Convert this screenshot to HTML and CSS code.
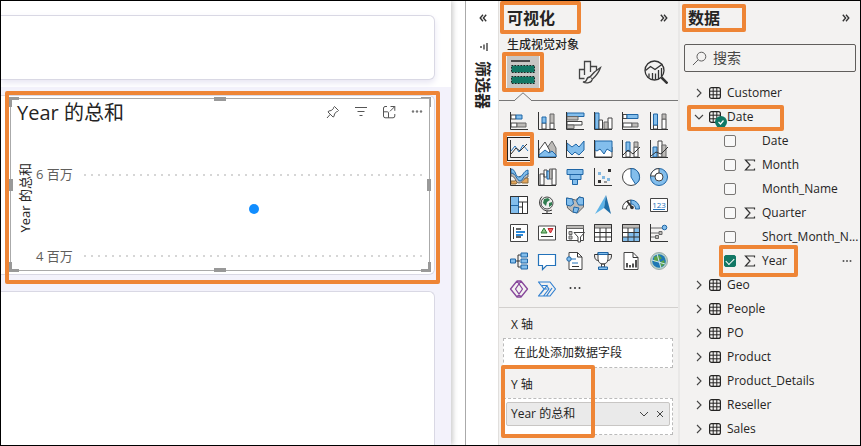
FILE: index.html
```html
<!DOCTYPE html>
<html lang="zh-CN">
<head>
<meta charset="utf-8">
<title>Year 的总和</title>
<link rel="stylesheet" href="styles.css">
</head>
<body>
<svg class="defs" aria-hidden="true">
  <symbol id="dbl" viewBox="0 0 10 10"><path d="M1 1l3.500 4-3.500 4M5 1l3.500 4-3.500 4" fill="none" stroke="#333" stroke-width="1.700"/></symbol>
  <symbol id="chev" viewBox="0 0 10 10"><path d="M3 1l4 4-4 4" fill="none" stroke="#444" stroke-width="1.100"/></symbol>
  <symbol id="table" viewBox="0 0 12 12"><rect x=".6" y=".6" width="10.800" height="10.800" rx="2" fill="none" stroke="#252423" stroke-width="1.200"/><path d="M4.200 .6v10.800M7.800 .6v10.800M.6 4.200h10.800M.6 7.800h10.800" stroke="#252423" stroke-width="1"/></symbol>
  <symbol id="sigma" viewBox="0 0 12 12"><path d="M10.500 2.500V1H1.500l4.500 5-4.500 5h9V9.500" fill="none" stroke="#333" stroke-width="1.200"/></symbol>
</svg>
<div class="app">
  <main class="canvas">
    <div class="sheet">
      <section class="card card-top"></section>
      <section class="card chart mark-host">
        <span class="mark mark-chart"></span>
        <div class="selection">
          <i class="h tl"></i><i class="h tr"></i><i class="h bl"></i><i class="h br"></i>
          <i class="h tm"></i><i class="h bm"></i><i class="h lm"></i><i class="h rm"></i>
          <header class="chart-head">
            <h1>Year 的总和</h1>
            <div class="tools">
              <button aria-label="固定"><svg viewBox="0 0 14 14"><path d="M8.500 1.500l4 4-1 1-1 .2-2 2.300-.5 2.500-1 .5-5-5 .7-1 2.500-.5 2.300-2L7.700 2.300zM4.300 9.300L1 13"/></svg></button>
              <button aria-label="筛选"><svg viewBox="0 0 14 14"><path d="M1 2.500h12M3.500 6.500h7M5.500 10.500h3"/></svg></button>
              <button aria-label="焦点模式"><svg viewBox="0 0 14 14"><path d="M5 1.500H3A1.800 1.800 0 0 0 1.500 3v8A1.800 1.800 0 0 0 3 12.800h8a1.800 1.800 0 0 0 1.800-1.800V9M8.500 1.500h4.300v4.300M12.800 1.500L8 6.300M1.500 6.800h4a1 1 0 0 1 1 1v5"/></svg></button>
              <button aria-label="更多选项"><svg viewBox="0 0 14 14"><g fill="#777" stroke="none"><circle cx="3" cy="6.500" r="1.200"/><circle cx="7" cy="6.500" r="1.200"/><circle cx="11" cy="6.500" r="1.200"/></g></svg></button>
            </div>
          </header>
          <div class="plot">
            <div class="axis-title">Year 的总和</div>
            <div class="ticks"><span>6 百万</span><span>4 百万</span></div>
            <div class="area"><i class="grid-line"></i><i class="grid-line"></i><i class="point"></i></div>
          </div>
        </div>
      </section>
      <section class="card card-bottom"></section>
    </div>
  </main>

  <aside class="filters">
    <button aria-label="展开筛选器"><svg class="dbl flip"><use href="#dbl"/></svg></button>
    <svg class="filter-icon" viewBox="0 0 10 10"><path d="M9 1v8M6 2.500v5M3 4v2" stroke="#333" stroke-width="1.300"/></svg>
    <h2>筛选器</h2>
  </aside>

  <section class="visuals">
    <header class="pane-head"><h2 class="mark-host">可视化<span class="mark mark-vis"></span></h2><button aria-label="折叠"><svg class="dbl"><use href="#dbl"/></svg></button></header>
    <h3>生成视觉对象</h3>
    <nav class="tabs">
      <button class="tab on mark-host" aria-label="生成"><span class="mark mark-tab"></span><svg viewBox="0 0 24 24"><path d="M0 1h19" stroke="#222" stroke-width="1.500"/><path d="M.5 5.500h23v7H.5zM.5 16.500h23v7H.5z" fill="#117865" stroke="#222" stroke-dasharray="1.500 1.500"/></svg></button>
      <button class="tab" aria-label="格式"><svg viewBox="0 0 24 24" fill="none" stroke="#444" stroke-width="1.300"><path d="M6.500 18.500H1.500V9.500h5M6.500 15V1.500h6V12M12.500 6.500h6v4"/><path d="M22.500 7.500c-4 2.500-8 6-10.500 9.500l2 2.500c3.500-3 7-7.500 8.500-12z" fill="#f3f2f1"/><path d="M12 17c-2 0-3 1-3.500 3-.4 1.500-1.500 2-3.500 2 3 1.500 9 1 9-2.500" fill="#f3f2f1"/></svg></button>
      <button class="tab" aria-label="分析"><svg viewBox="0 0 24 24" fill="none" stroke="#333" stroke-width="1.300"><circle cx="10.500" cy="10.500" r="9.500"/><path d="M17.500 17.500l6 6" stroke-width="2.500"/><path d="M1.500 10.500l5-4 4.500 3 7.500-5.500M5 17.500v-4M8.500 19v-6M11.500 19.500v-6M14.500 19V10M17.500 16.500V8"/></svg></button>
    </nav>
    <div class="divider"><svg viewBox="0 0 16 9"><path d="M0 8L8 .8 16 8v1H0z" fill="#f3f2f1"/><path d="M0 8L8 .8 16 8" fill="none" stroke="#777"/></svg></div>

    <div class="gallery">
      <button aria-label="堆积条形图"><svg viewBox="0 0 20 20"><path class="w" d="M2 4h5v4H2zM2 12h6v4H2z"/><path class="b" d="M7 4h6v4H7z"/><path class="g" d="M8 12h9v4H8z"/><path class="k" d="M1.500 1v17.500H19"/></svg></button>
      <button aria-label="堆积柱形图"><svg viewBox="0 0 20 20"><path class="w" d="M5 12h4v6H5zM13 12h4v6h-4z"/><path class="b" d="M5 6h4v6H5z"/><path class="g" d="M13 3h4v9h-4z"/><path class="k" d="M1.500 1v17.500H19"/></svg></button>
      <button aria-label="簇状条形图"><svg viewBox="0 0 20 20"><path class="b" d="M2 2h17v3.500H2z"/><path class="g" d="M2 5.500h11V9H2z"/><path class="w" d="M2 10.500h15V14H2z"/><path class="g" d="M2 14h7v3.500H2z"/><path class="k" d="M1.500 1v17.500H19"/></svg></button>
      <button aria-label="簇状柱形图"><svg viewBox="0 0 20 20"><path class="b" d="M2 2h4v16H2z"/><path class="w" d="M6 9h3.500v9H6zM15 7h4v11h-4z"/><path class="g" d="M11 11h4v7h-4z"/><path class="k" d="M1.500 1v17.500H19"/></svg></button>
      <button aria-label="百分比堆积条形图"><svg viewBox="0 0 20 20"><path class="w" d="M2 3.500h4v4H2zM2 12h9v4H2z"/><path class="b" d="M6 3.500h11v4H6z"/><path class="g" d="M11 12h6v4h-6z"/><path class="k" d="M1.500 1v17.500H19"/></svg></button>
      <button aria-label="百分比堆积柱形图"><svg viewBox="0 0 20 20"><path class="w" d="M4.500 14h4v4h-4zM13 8h4v10h-4z"/><path class="b" d="M4.500 3h4v11h-4z"/><path class="g" d="M13 3h4v5h-4z"/><path class="k" d="M1.500 1v17.500H19"/></svg></button>

      <button class="chosen mark-host" aria-label="折线图"><span class="mark mark-line"></span><svg viewBox="0 0 20 20"><path class="bl" d="M2 12l4-5 4 6 4-7 5 6"/><path class="k" d="M2 15l5-6 4 3 7-7"/><path class="k" d="M1.500 1v17.500H19"/></svg></button>
      <button aria-label="分区图"><svg viewBox="0 0 20 20"><path class="g" d="M10 9l5-7 4 7v9h-5z"/><path class="w" d="M2 11l6-8 5 9-4 6H2z"/><path class="b" d="M2 16l6-5 4 3 3-2 4 4v2H2z"/><path class="k" d="M1.500 1v17.500H19"/></svg></button>
      <button aria-label="堆积面积图"><svg viewBox="0 0 20 20"><path class="b" d="M2 4l5 4 4-3 3 3 5-6v9l-5 5-4-3-3 3-5-5z"/><path class="k" d="M1.500 1v17.500H19"/></svg></button>
      <button aria-label="百分比堆积面积图"><svg viewBox="0 0 20 20"><path class="w" d="M2 8h17v10H2z"/><path class="b" d="M2 2h17v11l-5-3-3 5-4-5-3 2-2-1z"/><path class="k" d="M1.500 1v17.500H19"/></svg></button>
      <button aria-label="折线和堆积柱形图"><svg viewBox="0 0 20 20"><path class="w" d="M5 12h4v6H5zM13 8h4v10h-4z"/><path class="b" d="M5 3h4v9H5z"/><path class="g" d="M13 3h4v5h-4z"/><path class="k" d="M2 16l5-5 5 4 7-7M1.500 1v17.500H19"/></svg></button>
      <button aria-label="折线和簇状柱形图"><svg viewBox="0 0 20 20"><path class="b" d="M4 8h4v10H4z"/><path class="w" d="M9 2h4v16H9z"/><path class="g" d="M13 6h4v12h-4z"/><path class="k" d="M2 17l5-4 5 2 7-7M1.500 1v17.500H19"/></svg></button>

      <button aria-label="功能区图表"><svg viewBox="0 0 20 20"><path d="M2 14h4l5-5 4 2h4v5h-6l-3-3-3 4H2z" fill="#e5a65b" stroke="#8a6a3a"/><path class="g" d="M2 9c5 0 4 7 8 7s4-5 9-6V6c-5 0-5 6-8 6S7 6 2 6z"/><path class="b" d="M2 2c5 0 4 8 8 8s4-6 9-7v4c-5 1-5 7-8 7S7 6 2 6z"/><path class="k" d="M1.500 1v17.500H19"/></svg></button>
      <button aria-label="瀑布图"><svg viewBox="0 0 20 20"><path class="w" d="M3 7h4v11H3zM7 3h3v7H7zM15 2h4v16h-4z"/><path class="b" d="M10 4h2.500v8H10z"/><path class="g" d="M12.500 2H15v10h-2.500z"/><path class="k" d="M1.500 1v17.500H19"/></svg></button>
      <button aria-label="漏斗图"><svg viewBox="0 0 20 20"><path class="b" d="M2 2.500h16v5H2zM5 7.500h11v5H5zM7.500 12.500h5v5h-5z"/></svg></button>
      <button aria-label="散点图"><svg viewBox="0 0 20 20"><path d="M5 5h3v3H5zM9 9h3v3H9zM14 11h3v3h-3z" fill="#83b8e0"/><path d="M15 2h3v3h-3zM5 13h3v3H5z" fill="#333"/><path d="M11 14h3v2h-3z" fill="#999"/><path class="k" d="M1.500 1v17.500H19"/></svg></button>
      <button aria-label="饼图"><svg viewBox="0 0 20 20"><circle class="w" cx="10" cy="10" r="8.500"/><path class="b" d="M10 1.500A8.500 8.500 0 0 1 14.500 17.200L10 10z"/></svg></button>
      <button aria-label="圆环图"><svg viewBox="0 0 20 20"><circle class="b" cx="10" cy="10" r="8.500"/><path class="w" d="M10 1.500A8.500 8.500 0 0 0 1.500 9H6a4 4 0 0 1 4-3z"/><circle class="w" cx="10" cy="10" r="4"/></svg></button>

      <button aria-label="树状图"><svg viewBox="0 0 20 20"><path class="w" d="M1.500 1.500h17v17h-17z"/><path class="b" d="M1.500 1.500h8v9h-8zM1.500 10.500h8v8h-8z"/><path class="k" d="M9.500 7h9M13.500 7v11.500M9.500 12h4M1.500 1.500h17v17h-17z"/></svg></button>
      <button aria-label="地图"><svg viewBox="0 0 20 20"><circle cx="10" cy="8" r="6" fill="#eee" stroke="#444"/><path d="M7 4l4-1 2 2-3 2-1 4-3-3zM12 8l3-1v3l-3 2z" fill="#2f7d4f"/><path class="k" d="M5 1.500a8.500 8.500 0 0 0 10 13.500M10 16v3M5 18.500h10"/></svg></button>
      <button aria-label="着色地图"><svg viewBox="0 0 20 20"><path class="g" d="M1.500 3l5 1 4 1 4-3 4 1v9l-3 3-3 3-5-1-5-4z"/><path class="b" d="M1.500 3l6 1 1 5-3 2-4-1zM14 2l4.500 1v7h-5l-2-4zM9 12l5 1-2 5-4-1z"/></svg></button>
      <button aria-label="Azure 地图"><svg viewBox="0 0 20 20"><path d="M13 0L2 19l9-6z" fill="#5fb4e8"/><path d="M13 0l5 19-7-6z" fill="#1f6ea8"/></svg></button>
      <button aria-label="仪表"><svg viewBox="0 0 20 20"><path class="w" d="M1.500 14a8.500 8.500 0 0 1 8.500-9v4a4.500 4.500 0 0 0-4.500 5z"/><path class="b" d="M10 5a8.500 8.500 0 0 1 8.500 9h-4A4.500 4.500 0 0 0 10 9z"/><path d="M6 6l5 6.500" stroke="#333" stroke-width="2"/><circle cx="11" cy="12.500" r="1.800" fill="#333"/></svg></button>
      <button aria-label="卡片"><svg viewBox="0 0 20 20"><path class="w" d="M1.500 3.500h17v13h-17z"/><text x="10" y="12.500">123</text><path class="bl" d="M4 14.500h12"/></svg></button>

      <button aria-label="多行卡"><svg viewBox="0 0 20 20"><path class="w" d="M1.500 1.500h17v17h-17z"/><path d="M4.500 4v12" stroke="#333"/><path d="M7 6h5M7 14h5" stroke="#333" stroke-width="1.500"/><path d="M7 9h9M7 12h7" stroke="#2b88d8" stroke-width="2"/></svg></button>
      <button aria-label="KPI"><svg viewBox="0 0 20 20"><path class="w" d="M1.500 3h17v14h-17z"/><path d="M4 10l3-5 3 5z" fill="#8cc48a" stroke="#2e7d32"/><path d="M11 5.500h5L13.500 10z" fill="#e66" stroke="#c4262e"/><path class="k" d="M4 13.500h12"/></svg></button>
      <button aria-label="切片器"><svg viewBox="0 0 20 20"><path class="w" d="M1.500 2.500h17v15h-17z"/><path class="g" d="M1.500 2.500h17v3h-17zM4 8.500h3v3H4zM4 13h3v3H4z"/><path class="w" d="M9 9.500h10.500l-4 4.500v5h-2.500v-5z"/></svg></button>
      <button aria-label="表"><svg viewBox="0 0 20 20"><path class="w" d="M1.500 1.500h17v17h-17z"/><path class="g" d="M1.500 1.500h17v3.500h-17z"/><path class="k" d="M7 5v13.500M13 5v13.500M1.500 9.500h17M1.500 14h17M1.500 1.500h17v17h-17z"/></svg></button>
      <button aria-label="矩阵"><svg viewBox="0 0 20 20"><path class="w" d="M1.500 1.500h17v17h-17z"/><path d="M13 5h5.500v13.500H13zM1.500 14h17v4.500h-17zM7 9.500h6V14H7z" fill="#83beec"/><path class="g" d="M1.500 1.500h17v3.500h-17z"/><path class="k" d="M7 5v13.500M13 5v13.500M1.500 9.500h17M1.500 14h17M1.500 1.500h17v17h-17z"/></svg></button>
      <button aria-label="关键影响者"><svg viewBox="0 0 20 20"><path d="M2 5h12M2 10h9M2 14h5" stroke="#666"/><circle class="b" cx="15.500" cy="4.500" r="2.300"/><path class="g" d="M10 8.500h3v3h-3zM6.500 12.500h3v3h-3z"/><path class="k" d="M1.500 1v17.500H19"/></svg></button>

      <button aria-label="分解树"><svg viewBox="0 0 20 20"><path class="k" d="M6 10h5M9 4v12M9 4h3M9 16h3"/><path class="b" d="M1.500 8h5v4h-5zM12 2h6.500v4H12zM12 8h6.500v4H12zM12 14h6.500v4H12z"/></svg></button>
      <button aria-label="问答"><svg viewBox="0 0 20 20"><path d="M1.500 3.500h17v11h-9l-4 4v-4h-4z" fill="#fff" stroke="#2372ba" stroke-width="1.200"/></svg></button>
      <button aria-label="智能叙述"><svg viewBox="0 0 20 20"><path class="w" d="M4 1.500h8.500l4.500 4.500v12.500H4z"/><path class="k" d="M12.500 1.500V6H17M7 15.500h7"/><path class="bl" d="M7 12h6M5 8h6"/><circle class="b" cx="4" cy="8" r="2.200"/></svg></button>
      <button aria-label="目标"><svg viewBox="0 0 20 20"><path class="w" d="M5 1.500h10V8c0 3-2 5-5 5S5 11 5 8zM8.500 13h3v3h-3z"/><path class="k" d="M5 3.500H1.500c0 4 1 6 4 6M15 3.500h3.500c0 4-1 6-4 6"/><path class="b" d="M5 1.500h10v2H5zM5.500 16h9v2.500h-9z"/></svg></button>
      <button aria-label="分页报表"><svg viewBox="0 0 20 20"><path class="w" d="M3 1.500h9l5 5v12H3z"/><path class="k" d="M12 1.500v5h5"/><path d="M6 12v4.500M9 14v2.500M12 12.500v4M15 9v7.500" stroke="#333" stroke-width="1.700"/></svg></button>
      <button aria-label="ArcGIS"><svg viewBox="0 0 20 20"><circle cx="10" cy="10" r="8.500" fill="#b7d3c8" stroke="#9aa"/><circle cx="10" cy="10" r="6.800" fill="#1f78b5"/><path d="M5 6l5-2 3 3-4 3-4 1zM11 11l4-2 1 4-4 3z" fill="#5aa34a"/><path d="M3 9l13 4M8 3l4 14" stroke="#cfe6ee"/></svg></button>

      <button aria-label="Power Apps"><svg viewBox="0 0 20 20"><path d="M8 2L1.500 10 8 18l5.500-8zM12 2l6.500 8-6.500 8-5.500-8zM8 2h4M8 18h4" fill="none" stroke="#87479b" stroke-width="1.300" stroke-linejoin="round"/></svg></button>
      <button aria-label="Power Automate"><svg viewBox="0 0 20 20"><path d="M1.500 3h11.500l5.500 7-5.500 7H1.500L7 10zM7 10h3.500M5 6.500h4.500L12 10l-5.500 7M3.500 15L10.500 6M9.500 17l5.500-8" fill="none" stroke="#2f7fd0" stroke-width="1.200" stroke-linejoin="round"/></svg></button>
      <button aria-label="更多"><svg viewBox="0 0 20 20" fill="#333"><circle cx="5.500" cy="9" r="1"/><circle cx="10" cy="9" r="1"/><circle cx="14.500" cy="9" r="1"/></svg></button>
    </div>

    <div class="wells">
      <h4>X 轴</h4>
      <div class="well">在此处添加数据字段</div>
      <div class="mark-host">
        <span class="mark mark-well"></span>
        <h4>Y 轴</h4>
        <div class="well filled"><div class="pill"><span>Year 的总和</span><button aria-label="展开"><svg viewBox="0 0 10 10"><path d="M1 3l4 4 4-4"/></svg></button><button aria-label="删除"><svg viewBox="0 0 10 10"><path d="M2 2l6 6M8 2L2 8"/></svg></button></div></div>
      </div>
    </div>
  </section>

  <section class="data">
    <header class="pane-head"><h2 class="mark-host">数据<span class="mark mark-data"></span></h2><button aria-label="折叠"><svg class="dbl"><use href="#dbl"/></svg></button></header>
    <label class="search"><svg viewBox="0 0 16 16"><circle cx="10" cy="6" r="4.700"/><path d="M6.500 9.500L1 15"/></svg><input type="search" placeholder="搜索" aria-label="搜索"></label>
    <ul class="tree">
      <li><button class="node"><svg class="chev"><use href="#chev"/></svg><svg class="tbl"><use href="#table"/></svg>Customer</button></li>
      <li><button class="node mark-host"><span class="mark mark-date"></span><svg class="chev open"><use href="#chev"/></svg><svg class="tbl"><use href="#table"/></svg>Date<svg class="badge" viewBox="0 0 12 12"><circle cx="6" cy="6" r="6" fill="#117865"/><path d="M3.500 6l2 2 3-3.500" fill="none" stroke="#fff" stroke-width="1.200"/></svg></button>
        <ul>
          <li><label class="leaf"><input type="checkbox"><i class="sg"></i><span>Date</span></label></li>
          <li><label class="leaf"><input type="checkbox"><svg class="sg"><use href="#sigma"/></svg><span>Month</span></label></li>
          <li><label class="leaf"><input type="checkbox"><i class="sg"></i><span>Month_Name</span></label></li>
          <li><label class="leaf"><input type="checkbox"><svg class="sg"><use href="#sigma"/></svg><span>Quarter</span></label></li>
          <li><label class="leaf"><input type="checkbox"><i class="sg"></i><span>Short_Month_N...</span></label></li>
          <li class="leaf-row mark-host"><span class="mark mark-year"></span><label class="leaf"><input type="checkbox" checked><svg class="sg"><use href="#sigma"/></svg><span>Year</span></label><button class="more" aria-label="更多"><svg viewBox="0 0 10 10" fill="#555"><circle cx="1.500" cy="5" r="1"/><circle cx="5" cy="5" r="1"/><circle cx="8.500" cy="5" r="1"/></svg></button></li>
        </ul>
      </li>
      <li><button class="node"><svg class="chev"><use href="#chev"/></svg><svg class="tbl"><use href="#table"/></svg>Geo</button></li>
      <li><button class="node"><svg class="chev"><use href="#chev"/></svg><svg class="tbl"><use href="#table"/></svg>People</button></li>
      <li><button class="node"><svg class="chev"><use href="#chev"/></svg><svg class="tbl"><use href="#table"/></svg>PO</button></li>
      <li><button class="node"><svg class="chev"><use href="#chev"/></svg><svg class="tbl"><use href="#table"/></svg>Product</button></li>
      <li><button class="node"><svg class="chev"><use href="#chev"/></svg><svg class="tbl"><use href="#table"/></svg>Product_Details</button></li>
      <li><button class="node"><svg class="chev"><use href="#chev"/></svg><svg class="tbl"><use href="#table"/></svg>Reseller</button></li>
      <li><button class="node"><svg class="chev"><use href="#chev"/></svg><svg class="tbl"><use href="#table"/></svg>Sales</button></li>
    </ul>
  </section>
</div>
</body>
</html>
```
FILE: styles.css
```css
* { box-sizing: border-box; }
body { margin: 0; font: 12px/16px "Open Sans", "Noto Sans CJK SC", sans-serif; color: #252423; }
h1, h2, h3, h4, ul { margin: 0; padding: 0; font-weight: 400; font-size: inherit; list-style: none; }
button { margin: 0; padding: 0; border: 0; background: none; font: inherit; color: inherit; display: flex; align-items: center; }
svg { display: block; flex: none; }
.defs { position: absolute; width: 0; height: 0; }

.app { display: flex; height: 100vh; border: 1px solid #000; overflow: hidden; background: #f3f2f1; }

/* highlight frames */
.mark-host { position: relative; }
.mark { position: absolute; border: 4px solid #ee8536; border-radius: 2px; pointer-events: none; z-index: 2; }
.mark-chart { inset: -5px -6px -10px 4px; }
.mark-vis { inset: -5px -26px -4px -7px; }
.mark-tab { inset: -4px -5px; }
.mark-line { inset: -6px -4px -6px -5px; }
.mark-well { inset: -12px 79px -3px -2px; }
.mark-data { inset: -2px -26px -2px -6px; }
.mark-date { inset: 0 76px -2px 7px; }
.mark-year { inset: -4px 62px -4px 39px; }

/* report canvas */
.canvas { flex: 1; min-width: 0; display: flex; background: #fff; padding-right: 14px; }
.sheet { flex: 1; min-width: 0; display: flex; flex-direction: column; padding: 14px 16px 0 0; background: linear-gradient(#fff 86px, #f3f2fb 86px); box-shadow: 2px 0 5px #ccc; }
.card { background: #fff; border: 1px solid #d9d8e4; border-left: 0; border-radius: 0 6px 6px 0; }
.card-top { height: 65px; box-shadow: 0 3px 6px #e8e6f3; }
.chart { margin-top: 15px; height: 180px; padding: 2px 4px 3px 9px; }
.card-bottom { flex: 1; margin-top: 16px; border-bottom: 0; border-bottom-right-radius: 0; }
.selection { position: relative; height: 100%; border: 1px solid #aaa; padding: 1px 5px 0 6px; display: flex; flex-direction: column; }
.h { position: absolute; background: #999; }
.tm, .bm { width: 12px; height: 4px; left: 50%; margin-left: -6px; }
.tm { top: -2px; } .bm { bottom: -2px; }
.lm, .rm { width: 4px; height: 12px; top: 50%; margin-top: -6px; }
.lm { left: -2px; } .rm { right: -2px; }
.tl, .tr, .bl, .br { width: 10px; height: 10px; background: none; border: 0 solid #999; }
.tl { top: -2px; left: -2px; border-width: 3px 0 0 3px; }
.tr { top: -2px; right: -2px; border-width: 1px 1px 0 0; }
.h.bl { bottom: -2px; left: -2px; border-width: 0 0 3px 3px; }
.br { bottom: -2px; right: -2px; border-width: 0 3px 3px 0; }
.chart-head { display: flex; justify-content: space-between; }
.chart-head h1 { font-size: 20px; line-height: 26px; }
.tools { display: flex; gap: 14px; height: 24px; }
.tools svg { width: 14px; height: 14px; fill: none; stroke: #555; }
.plot { flex: 1; display: flex; font-size: 13px; line-height: 18px; }
.axis-title { writing-mode: vertical-rl; transform: rotate(180deg); line-height: 16px; align-self: center; text-orientation: sideways; }
.ticks { padding: 39px 0 5px 3px; width: 51px; color: #605e5c; display: flex; flex-direction: column; justify-content: space-between; }
.area { position: relative; flex: 1; display: flex; flex-direction: column; justify-content: space-between; padding: 48px 0 13px; }
.grid-line { height: 2px; background: repeating-linear-gradient(90deg, #d6d6d6 0 2px, transparent 2px 7px); }
.point { position: absolute; width: 10px; height: 10px; border-radius: 50%; background: #118dff; left: 50%; top: 54%; margin-left: -5px; }

/* filters pane */
.filters { width: 34px; border-left: 1px solid #aaa; border-right: 1px solid #e1dfdd; background: #fff; display: flex; flex-direction: column; align-items: center; padding: 13px 0 0 2px; }
.dbl { width: 8px; height: 8px; }
.flip { transform: scaleX(-1); }
.filter-icon { width: 10px; height: 10px; margin: 20px 0 9px; }
.filters h2 { writing-mode: vertical-rl; font-size: 16px; line-height: 20px; font-weight: 700; text-orientation: sideways; }

/* visualizations pane */
.visuals { width: 181px; border-right: 2px solid #e9e8e7; padding: 5px 4px 0; }
.pane-head { display: flex; align-items: center; justify-content: space-between; padding: 0 6px 0 4px; }
.pane-head h2 { font-size: 16px; line-height: 24px; font-weight: 700; }
.visuals h3 { font-weight: 500; margin: 7px 4px 0; line-height: 16px; }
.tabs { display: flex; justify-content: space-between; padding: 3px 2px 0 4px; }
.tab { width: 32px; height: 32px; justify-content: center; }
.tab.on { background: #c8c6c4; }
.tab svg { width: 24px; height: 24px; }
.divider { border-bottom: 1px solid #777; margin: 3px -4px 0; height: 10px; display: flex; align-items: flex-end; padding-left: 16px; }
.divider svg { width: 16px; height: 9px; margin-bottom: -1px; }
.gallery { display: grid; grid-template-columns: repeat(6, 28px); grid-auto-rows: 28px; padding: 6px 0 4px 2px; }
.gallery button { justify-content: center; }
.gallery svg { width: 20px; height: 20px; }
.gallery .chosen { border: 1px solid #222; margin: 2px; }
.gallery text { font: 8px "Open Sans", sans-serif; text-anchor: middle; fill: #2372ba; }
.k { fill: none; stroke: #333; }
.w { fill: #fff; stroke: #444; }
.b { fill: #83beec; stroke: #1f66a6; }
.g { fill: #bdbbb8; stroke: #666; }
svg .bl { fill: none; stroke: #2372ba; }
.wells { border-top: 1px solid #d2d0ce; margin: 0 -4px; padding: 9px 4px; }
.wells h4 { padding-left: 8px; line-height: 16px; }
.well { border: 1px dashed #bbb; background: #fff; margin: 5px 1px 9px 0; padding: 5px 10px; line-height: 18px; }
.filled { padding: 3px 2px 8px; margin-bottom: 0; }
.pill { display: flex; align-items: center; gap: 6px; background: #eaeaea; border: 1px solid #c8c6c4; border-radius: 2px; padding: 2px 4px; line-height: 18px; }
.pill span { flex: 1; }
.pill svg { width: 10px; height: 10px; fill: none; stroke: #444; }

/* data pane */
.data { width: 180px; padding: 5px 4px 0; }
.search { display: flex; align-items: center; gap: 6px; border: 1px solid #605e5c; border-radius: 2px; height: 28px; margin-top: 14px; padding: 0 7px; }
.search svg { width: 15px; height: 15px; fill: none; stroke: #555; }
.search input { flex: 1; min-width: 0; border: 0; padding: 0; background: none; outline: 0; font: 14px/20px "Open Sans", "Noto Sans CJK SC", sans-serif; }
.search input::placeholder { color: #484644; opacity: 1; }
.tree { margin: 9px -4px 0; }
.node { width: 100%; height: 24px; padding-left: 14px; }
.chev { width: 10px; height: 10px; margin-right: 5px; }
.open { transform: rotate(90deg); }
.tbl { width: 12px; height: 12px; margin-right: 6px; }
.badge { position: absolute; width: 12px; height: 12px; left: 35px; top: 11px; }
.leaf { display: flex; align-items: center; height: 24px; padding-left: 44px; }
.leaf input { appearance: none; width: 12px; height: 12px; margin: 0 8px 0 0; border: 1px solid #797775; border-radius: 2px; background: #f8f8f8; }
.leaf input:checked { border-color: #117865; background: #117865; display: grid; place-items: center; }
.leaf input:checked::before { content: ""; width: 7px; height: 4px; border: solid #fff; border-width: 0 0 1px 1px; transform: rotate(-45deg); margin-bottom: 2px; }
.sg { width: 12px; height: 12px; margin-right: 6px; }
.leaf-row { display: flex; align-items: center; justify-content: space-between; padding-right: 8px; }
.more svg { width: 10px; height: 10px; }
```
